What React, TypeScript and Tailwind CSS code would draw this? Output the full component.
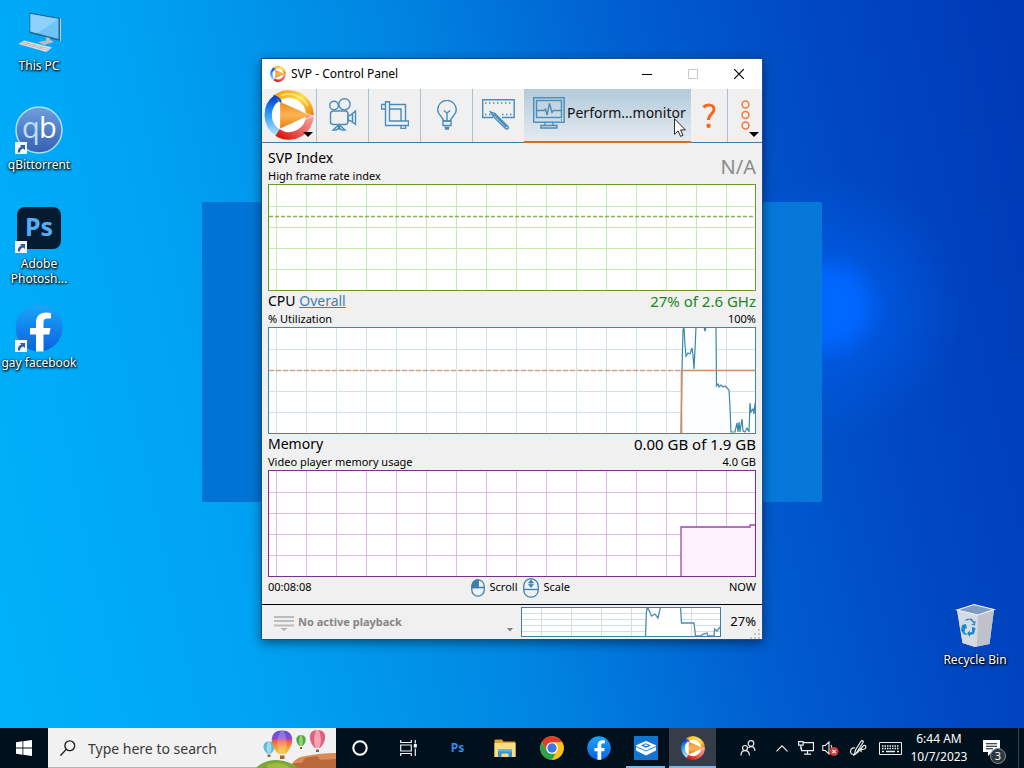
import React, { useState } from 'react';

type Point = [number, number];

const CPU_TRACE: Point[] = [
  [413, 106], [414, 43], [415, 3], [416, 0], [417, 18], [418, 29], [420, 26], [422, 27], [424, 21],
  [425, 28], [426, 42], [427, 23], [428, 0], [436, 0], [437, 4], [438, 0], [448, 0], [448.5, 59],
  [450, 57], [451, 60], [453, 58], [455, 60], [457, 59], [459, 61], [461, 63], [462, 80], [463, 105],
  [467, 105], [469, 96], [470, 105], [471, 95], [472, 105], [473, 98], [474, 92], [475, 104],
  [477, 105], [479, 101], [481, 105], [482, 76], [483, 85], [485, 82], [486, 87], [487, 76],
];

const MINI_TRACE: Point[] = [
  [124.5, 29], [125.5, 4], [126.5, 0], [130.5, 9], [134, 7], [137, 11], [139.5, 0], [159.5, 0],
  [160.5, 16], [173, 16], [174.5, 29], [180, 29], [182, 27], [186, 26], [187, 29], [193, 29],
  [193.5, 22], [196, 24], [199, 20],
];

const MEMORY_TRACE: Point[] = [[413, 106], [413, 57], [482, 57], [482, 55], [487, 55]];

const toPoints = (points: Point[]) => points.map((p) => p.join(',')).join(' ');

interface ChartProps {
  label: string;
  border: string;
  grid: string;
  children?: React.ReactNode;
}

function Chart({ label, border, grid, children }: ChartProps) {
  return (
    <svg
      role="img"
      aria-label={label}
      viewBox="0 0 488 107"
      preserveAspectRatio="none"
      className="block h-[107px] w-full bg-white"
      fill="none"
    >
      <g stroke={grid}>
        {Array.from({ length: 16 }, (_, i) => (
          <path key={i} d={`M${8.5 + i * 30} 0V107`} />
        ))}
        {[22.5, 43.5, 64.5, 85.5].map((y) => (
          <path key={y} d={`M0 ${y}H488`} />
        ))}
      </g>
      {children}
      <rect x="0.5" y="0.5" width="487" height="106" stroke={border} />
    </svg>
  );
}

function SvpLogo({ id, className }: { id: string; className: string }) {
  return (
    <svg viewBox="0 0 48 48" className={className} fill="none" aria-hidden="true">
      <defs>
        <linearGradient id={`${id}-blue`} x1="0" y1="0" x2="0" y2="1">
          <stop offset="0" stopColor="#0b3fd0" />
          <stop offset="0.45" stopColor="#2a9af5" />
          <stop offset="1" stopColor="#a8dcff" />
        </linearGradient>
        <linearGradient id={`${id}-yellow`} x1="0" y1="0" x2="1" y2="1">
          <stop offset="0" stopColor="#f5a216" />
          <stop offset="0.45" stopColor="#ffdf45" />
          <stop offset="1" stopColor="#f08a1c" />
        </linearGradient>
        <linearGradient id={`${id}-red`} x1="1" y1="0" x2="0" y2="1">
          <stop offset="0" stopColor="#f7a09a" />
          <stop offset="0.5" stopColor="#e96a68" />
          <stop offset="1" stopColor="#d9150f" />
        </linearGradient>
        <linearGradient id={`${id}-play`} x1="0" y1="0" x2="0" y2="1">
          <stop offset="0" stopColor="#f08a1a" />
          <stop offset="0.5" stopColor="#fbb454" />
          <stop offset="1" stopColor="#ee7d10" />
        </linearGradient>
      </defs>
      <circle cx="24" cy="24" r="20" fill="#fff" />
      <path d="M14 41.300A20 20 0 0 1 13 7.300" stroke={`url(#${id}-blue)`} strokeWidth="7" />
      <path d="M44 23A20 20 0 0 1 13 40.700" stroke={`url(#${id}-red)`} strokeWidth="7.500" />
      <path d="M12 8A20 20 0 0 1 44 24" stroke={`url(#${id}-yellow)`} strokeWidth="7.500" />
      <path d="M9 5.500C13 7 16 9 16 12" stroke="#1247c9" strokeWidth="2" />
      <path d="M15.500 11.500 44 24 15.500 37z" fill={`url(#${id}-play)`} />
      <path d="M36 20.500 47 25 38 29" stroke="#fff" strokeOpacity="0.6" />
      <path d="M16 5.500A20.500 20.500 0 0 1 42 15" stroke="#fff3a0" strokeOpacity="0.8" strokeWidth="1.500" />
    </svg>
  );
}

function ToolIcon({ viewBox, className, children }: { viewBox: string; className: string; children: React.ReactNode }) {
  return (
    <svg viewBox={viewBox} className={className} fill="none" stroke="#4a8db8" strokeWidth="1.4" aria-hidden="true">
      {children}
    </svg>
  );
}

function CameraIcon() {
  return (
    <ToolIcon viewBox="0 0 28 33" className="h-[33px] w-7">
      <circle cx="5" cy="7.500" r="4.300" />
      <circle cx="15.500" cy="6.300" r="5.600" />
      <rect x="1.500" y="13" width="17.500" height="13.500" rx="3" />
      <path d="M19 17.500h2l5.500-4.500v13.500L21 22.500h-2zM23.500 15.500V24M10 26.500 4 32h3.500L10 29l2.500 3H16zM10 26.500V32" />
    </ToolIcon>
  );
}

function CropIcon() {
  return (
    <ToolIcon viewBox="0 0 28 28" className="size-7">
      <path d="M4.500.7h4V20h19v4.500h-23zM4.500 3.500h-4V8h4M8.500 3.500h16V20M8.500 8H20v12M20 24.500v3h4.500v-3" />
    </ToolIcon>
  );
}

function BulbIcon() {
  return (
    <ToolIcon viewBox="0 0 20 30" className="h-[30px] w-5">
      <path d="M6.500 21c0-4-5.800-6-5.800-11.300a9.300 9.300 0 0 1 18.600 0C19.300 15 13.500 17 13.500 21z" />
      <path d="M10 21v-8L6.800 10.500M10 13l3.200-2.500M6 21h8v4.500H6zM7.500 27.500h5M8 29h4" />
    </ToolIcon>
  );
}

function FilmIcon() {
  return (
    <ToolIcon viewBox="0 0 33 31" className="h-[31px] w-[33px]">
      <path d="M11 18.500H.7V.7h31.500v17.800H20" />
      <path d="M3 4h28M3 15.500h6M20 15.500h11" strokeDasharray="1.500 2.500" />
      <path d="m8.500 13 4.500 1.500L26 27.500c1.500 1.500-1 3.500-2.500 2L11 17zM13 14.500 11 17M12.500 15.800l12 12.500" />
    </ToolIcon>
  );
}

function MonitorIcon() {
  return (
    <ToolIcon viewBox="0 0 32 32" className="h-8 w-8">
      <rect x="0.700" y="0.700" width="30.500" height="24.500" />
      <rect x="3.500" y="3.500" width="25" height="17" />
      <path d="M4 13.500h7l1.500-1.500 1.500 6L16.500 6.500l2.500 9 1.500-2h7.500M12 25v3.500h8V25M8 28.500h16V31H8zM28 23h1" />
    </ToolIcon>
  );
}

function ToolButton({ label, children }: { label: string; children: React.ReactNode }) {
  return (
    <button
      type="button"
      aria-label={label}
      className="flex w-[52px] shrink-0 items-center justify-center border-l border-[#a9c0d2] pb-0.5"
    >
      {children}
    </button>
  );
}

function Toolbar() {
  return (
    <div className="flex h-[54px] border-b border-[#3b7cac] bg-[#f0f0f0]">
      <button type="button" aria-label="Main menu" className="relative flex w-[54px] shrink-0 items-center justify-center pb-0.5">
        <SvpLogo id="toolbar" className="size-[50px]" />
        <svg viewBox="0 0 10 5" className="absolute right-[3px] bottom-[5px] h-[5px] w-[10px]" aria-hidden="true">
          <path d="M0 0h10L5 5z" />
        </svg>
      </button>
      <ToolButton label="Video profiles"><CameraIcon /></ToolButton>
      <ToolButton label="Crop"><CropIcon /></ToolButton>
      <ToolButton label="Lights"><BulbIcon /></ToolButton>
      <ToolButton label="Processing"><FilmIcon /></ToolButton>
      <button
        type="button"
        className="relative -mb-px flex min-w-0 flex-1 items-center gap-0.5 border-b-2 border-[#cf6f27] bg-linear-to-b from-[#b3cbdc] to-[#e4eaef] pb-1 pl-[9px] text-sm whitespace-nowrap text-[#111]"
      >
        <MonitorIcon />
        <span>Perform...monitor</span>
        <svg viewBox="0 0 12 19" className="absolute top-[29px] right-[5px] h-[19px] w-3" aria-hidden="true">
          <path d="M.5.8v15.500l3.600-3.400 2.500 5.500 2.400-1-2.400-5.500h4.800z" fill="#fff" stroke="#111" strokeWidth="0.900" />
        </svg>
      </button>
      <button type="button" aria-label="Help" className="flex w-9 shrink-0 items-center justify-center">
        <svg viewBox="0 0 14 26" className="h-[26px] w-3.5" fill="none" aria-hidden="true">
          <path d="M1.500 4.500C4 1.500 12 .500 12 6.500c0 4.500-5.500 4.500-5.500 10.500" stroke="#f06a1f" strokeWidth="3" />
          <circle cx="6.600" cy="22.800" r="2.200" fill="#f06a1f" />
        </svg>
      </button>
      <button
        type="button"
        aria-label="More"
        className="relative flex w-[35px] shrink-0 items-center justify-center border-l border-[#a9c0d2] pb-0.5"
      >
        <svg viewBox="0 0 9 30" className="h-[30px] w-[9px]" fill="none" stroke="#ee7a41" strokeWidth="1.500" aria-hidden="true">
          <circle cx="4.500" cy="4.500" r="3.400" />
          <circle cx="4.500" cy="15" r="3.400" />
          <circle cx="4.500" cy="25.500" r="3.400" />
        </svg>
        <svg viewBox="0 0 10 5" className="absolute right-[3px] bottom-[5px] h-[5px] w-[10px]" aria-hidden="true">
          <path d="M0 0h10L5 5z" />
        </svg>
      </button>
    </div>
  );
}

function TitleBar() {
  return (
    <header className="flex h-[30px] items-center bg-white pl-2">
      <SvpLogo id="title" className="size-4" />
      <h1 className="ml-[5px] flex-1 text-xs text-black">SVP - Control Panel</h1>
      <button type="button" aria-label="Minimize" className="flex h-full w-[46px] items-center justify-center">
        <svg viewBox="0 0 10 10" className="size-2.5"><path d="M0 5.500h10" stroke="#000" /></svg>
      </button>
      <button type="button" aria-label="Maximize" disabled className="flex h-full w-[46px] items-center justify-center">
        <svg viewBox="0 0 10 10" className="size-2.5" fill="none"><path d="M.5.5h9v9h-9z" stroke="#c8c8c8" /></svg>
      </button>
      <button type="button" aria-label="Close" className="flex h-full w-[46px] items-center justify-center">
        <svg viewBox="0 0 10 10" className="size-2.5"><path d="m0 0 10 10M10 0 0 10" stroke="#000" strokeWidth="1.200" /></svg>
      </button>
    </header>
  );
}

function ChartHeading({ title, value, left, right }: {
  title: React.ReactNode;
  value: React.ReactNode;
  left: string;
  right: string;
}) {
  return (
    <div className="h-9">
      <div className="flex h-5 items-center justify-between">
        <h2 className="text-sm">{title}</h2>
        <span className="text-[15px]">{value}</span>
      </div>
      <div className="flex h-4 items-center justify-between text-[11px]">
        <span>{left}</span>
        <span>{right}</span>
      </div>
    </div>
  );
}

function Monitor() {
  return (
    <main className="px-1.5 text-black">
      <div className="flex h-[41px] items-center justify-between pt-1">
        <div>
          <h2 className="text-sm leading-5">SVP Index</h2>
          <p className="text-[11px] leading-[15px]">High frame rate index</p>
        </div>
        <span className="pt-0.5 text-xl text-[#8b8b8b]">N/A</span>
      </div>
      <Chart label="SVP Index" border="#6b9a2e" grid="#c6ecad">
        <path d="M1 32.500H487" stroke="#8fae62" strokeWidth="1.400" strokeDasharray="4 2" />
      </Chart>

      <ChartHeading
        title={<>CPU <a href="#overall" className="text-[#3d7fb5] underline">Overall</a></>}
        value={<span className="text-[#1c861c]">27% of 2.6 GHz</span>}
        left="% Utilization"
        right="100%"
      />
      <Chart label="CPU utilization" border="#3f86b0" grid="#cfe3ea">
        <polygon points={`${toPoints(CPU_TRACE)} 487,107 413,107`} fill="#fdfeff" />
        <path d="M413 22.500h2M458.500 0v58M449 22.500h38" stroke="#cfe3ea" />
        <polyline points={toPoints(CPU_TRACE)} stroke="#3a87a8" strokeWidth="1.200" />
        <path d="M1 43.500H413" stroke="#d9a27c" strokeWidth="1.500" strokeDasharray="5 2" />
        <path d="M413.500 106V43.500H487" stroke="#d58b62" strokeWidth="1.600" />
      </Chart>

      <ChartHeading
        title="Memory"
        value="0.00 GB of 1.9 GB"
        left="Video player memory usage"
        right="4.0 GB"
      />
      <Chart label="Video player memory usage" border="#7b2f8e" grid="#dfb9e3">
        <polygon points={`${toPoints(MEMORY_TRACE)} 487,107`} fill="#fcf1fe" />
        <polyline points={toPoints(MEMORY_TRACE)} stroke="#9a48ac" strokeWidth="1.300" />
      </Chart>

      <div className="flex h-[27px] items-center justify-between pb-1.5 text-[11px]">
        <span>00:08:08</span>
        <span className="flex items-center gap-[5px]">
          <svg viewBox="0 0 14 18" className="h-[18px] w-3.5" fill="none" stroke="#3a80ae" strokeWidth="1.300" aria-hidden="true">
            <path d="M7 1a6 6 0 0 0-6 6v1.500h6z" fill="#3a80ae" />
            <rect x="0.800" y="0.800" width="12.400" height="16.400" rx="6.200" />
            <path d="M1 8.500h12M7 1v7.500" />
          </svg>
          Scroll
          <svg viewBox="0 0 16 20" className="h-5 w-4" fill="none" stroke="#3a80ae" strokeWidth="1.300" aria-hidden="true">
            <rect x="0.800" y="0.800" width="14.400" height="18.400" rx="7" />
            <path d="M1 11.500h14" />
            <path d="m8 2 2.500 3h-5zM8 9.500l2.500-3h-5zM8 4v4" fill="#3a80ae" strokeWidth="0.600" />
          </svg>
          Scale
        </span>
        <span>NOW</span>
      </div>
    </main>
  );
}

function StatusBar() {
  return (
    <footer className="relative flex h-[35px] items-center border-t border-black pl-3">
      <svg viewBox="0 0 20 16" className="mt-0.5 h-4 w-5" stroke="#bcbcbc" strokeWidth="2" aria-hidden="true">
        <path d="M0 2h20M0 6h20M0 10.500h20" />
        <path d="M6.500 13h7l-3.500 3z" fill="#b0b0b0" stroke="none" />
      </svg>
      <span className="ml-1 flex-1 text-[11px] font-bold text-[#858585]">No active playback</span>
      <svg viewBox="0 0 6 4" className="mt-4 mr-2 h-1 w-1.5" fill="#7d7d7d" aria-hidden="true">
        <path d="M0 0h6L3 3.500z" />
      </svg>
      <svg
        role="img"
        aria-label="Recent CPU load"
        viewBox="0 0 200 30"
        className="h-[30px] w-[200px] bg-white"
        fill="none"
      >
        <path
          d="M20.500 0V30M50.500 0V30M80.500 0V30M110.500 0V30M170.500 0V30M0 6.500H125M0 12.500H125M0 18.500H125M0 24.500H125M160 6.500H200M160 12.500H200M174 18.500H200M174 24.500H200"
          stroke="#cde0ec"
        />
        <polyline points={toPoints(MINI_TRACE)} stroke="#4c8db2" strokeWidth="1.300" />
        <rect x="0.500" y="0.500" width="199" height="29" stroke="#3c7fab" />
      </svg>
      <span className="w-[41px] pr-1.5 text-right text-[13px] text-black">27%</span>
      <svg viewBox="0 0 10 10" className="absolute right-0.5 bottom-0 size-2.5" fill="#c9c3c9" aria-hidden="true">
        <path d="M8 0h2v2H8zM4 4h2v2H4zM8 4h2v2H8zM0 8h2v2H0zM4 8h2v2H4zM8 8h2v2H8z" />
      </svg>
    </footer>
  );
}

function ShortcutArrow() {
  return (
    <svg viewBox="0 0 12 12" className="absolute bottom-0 left-0 size-3" aria-hidden="true">
      <path d="M0 0h12v12H0z" fill="#f2f6fb" />
      <path d="M3 10.500C2.500 7 4.500 5 6.500 5L5 3h5v5L8.300 6.500C6 7 5 8.500 5 10.500z" fill="#2c5d9e" />
    </svg>
  );
}

function DesktopIcon({ label, shortcut, children }: { label: string; shortcut?: boolean; children: React.ReactNode }) {
  return (
    <button
      type="button"
      className="flex w-[78px] flex-col items-center gap-[3px] text-center text-xs leading-[15px] text-white [text-shadow:1px_1px_2px_#000,0_0_2px_#000c,0_1px_3px_#000a]"
    >
      <span className="relative block size-12">
        {children}
        {shortcut && <ShortcutArrow />}
      </span>
      <span className="whitespace-pre">{label}</span>
    </button>
  );
}

function FacebookMark({ id, className }: { id: string; className: string }) {
  return (
    <svg viewBox="0 0 48 48" className={className} aria-hidden="true">
      <defs>
        <linearGradient id={id} x1="0" y1="0" x2="0" y2="1">
          <stop offset="0" stopColor="#1ba5f7" />
          <stop offset="1" stopColor="#0a62e2" />
        </linearGradient>
      </defs>
      <circle cx="24" cy="24" r="23.500" fill={`url(#${id})`} />
      <path
        d="M21 47.500V30.500h-6V24h6v-5c0-7 3.800-10.500 10-10.500 2 0 3.500.2 5 .5v5.500h-3.500c-3 0-4 1.500-4 4V24h7l-1.200 6.500h-5.800v17z"
        fill="#fff"
      />
    </svg>
  );
}

function DesktopIcons() {
  return (
    <nav aria-label="Desktop" className="flex flex-col items-center gap-[33px] pt-[7px]">
      <DesktopIcon label="This PC">
        <svg viewBox="0 0 48 48" className="size-12" aria-hidden="true">
          <path d="M14.500 5.500 45 11v23L14.500 26z" fill="#27658f" />
          <path d="M15.500 7 43.500 12v20L15.500 24.500z" fill="#6fc3f8" />
          <path d="M15.500 7 43.500 12 22 26.300l-6.500-1.800z" fill="#8dd2fb" />
          <path d="m45 11 1 .5V34l-1 .5z" fill="#c9c9c9" />
          <path d="m25 29 6 1.500v3l-8 1.500 6 3 10-3-4-2.500V31z" fill="#b9bcc2" />
          <path d="m9 33.500 28 7-5.500 4.500L3.500 37z" fill="#e9e3e4" />
          <path d="m7.500 35 27.500 7M5.500 36 33 43.500M14 35l-4 3.500M21 37l-4.500 3.500M28 38.700 23.500 42" stroke="#b5acb6" strokeWidth="0.800" />
        </svg>
      </DesktopIcon>
      <DesktopIcon label="qBittorrent" shortcut>
        <svg viewBox="0 0 48 48" className="size-12 [text-shadow:none]" aria-hidden="true">
          <defs>
            <linearGradient id="qb" x1="0" y1="0" x2="0" y2="1">
              <stop offset="0" stopColor="#6d9fdc" />
              <stop offset="1" stopColor="#3560b5" />
            </linearGradient>
          </defs>
          <circle cx="24" cy="24" r="23" fill="url(#qb)" stroke="#a6e3fa" strokeWidth="1.500" />
          <text x="7" y="32" fontFamily="Open Sans, sans-serif" fontSize="29" fill="#bfe0fa">q</text>
          <text x="24" y="32" fontFamily="Open Sans, sans-serif" fontSize="29" fill="#fff">b</text>
        </svg>
      </DesktopIcon>
      <DesktopIcon label={'Adobe\nPhotosh...'} shortcut>
        <span className="absolute inset-x-0.5 top-0.5 flex h-[42px] items-center justify-center rounded-lg bg-[#041c32] pb-1 text-[25px] font-bold text-[#55aef5] [text-shadow:none]">
          Ps
        </span>
      </DesktopIcon>
      {/* the two-line label above eats into this gap */}
      <div className="-mt-[15px]">
        <DesktopIcon label="gay facebook" shortcut>
          <FacebookMark id="fb-desktop" className="size-12" />
        </DesktopIcon>
      </div>
    </nav>
  );
}

function RecycleBin() {
  return (
    <DesktopIcon label="Recycle Bin">
      <svg viewBox="0 0 48 48" className="size-12" aria-hidden="true">
        <path d="M6 9 23 3.500 43 8.500 38.500 43 24 46 11.500 42z" fill="#c3c8d3" />
        <path d="M6 9 23 3.500 43 8.500 27 14z" fill="#7f9cc4" />
        <path d="m6 9 21 5-1 31.500-2 .5-12.500-4z" fill="#d5dae3" />
        <path d="M27 14 43 8.500 38.500 43 26 45.500z" fill="#bfc2ca" />
        <path d="M6 9 23 3.500 43 8.500 27 14z" fill="none" stroke="#eef2f7" strokeWidth="1.200" />
        <g fill="#1e86cf">
          <path d="m14 20 5-1.500 4 4-3 1 4 1 .5-4.500-1.500.5-2.500-3-5 .5z" />
          <path d="m11 24 4-1 1 4.500-1.500-.5-1 4 3 3-3.500-.5-3-4z" />
          <path d="m21 26 3.500 1-1.500 6-4 1v2l-3-3.500 3-3v2l2-.5z" />
        </g>
      </svg>
    </DesktopIcon>
  );
}

function BalloonArt() {
  return (
    <svg viewBox="0 0 80 40" className="h-10 w-20 shrink-0" aria-hidden="true">
      <defs>
        <linearGradient id="balloon" x1="0" y1="0" x2="0" y2="1">
          <stop offset="0" stopColor="#5a55d6" />
          <stop offset="0.350" stopColor="#8c4bd0" />
          <stop offset="0.450" stopColor="#ef5a4c" />
          <stop offset="0.750" stopColor="#f6a52e" />
          <stop offset="1" stopColor="#f7c83c" />
        </linearGradient>
      </defs>
      <path d="M30 40c8-4 8-11 20-12 10-2 20-3 30-3v15z" fill="#d98a55" />
      <path d="M38 35h8l3-5 12-2 3 4 16-1v9H36z" fill="#b9683c" />
      <path d="M0 40c9-9 22-10 34-5l9 5z" fill="#7da53a" />
      <path d="M10 37c8-3 18-3 24 3H12z" fill="#9dbb3f" />
      <path d="M13 13.500c7 0 7 8 2 12h-4c-5-4-5-12 2-12z" fill="#5fb8d8" />
      <path d="M12 14c-2 4-2 8 0 11.500h2c2-3.500 2-7.500 0-11.500z" fill="#9ddbe9" />
      <path d="M11.500 26.500h3V29h-3z" fill="#8c6a3c" />
      <path d="M26 2.500c13 0 13 14 3.500 23.500h-7C13 16.500 13 2.500 26 2.500z" fill="url(#balloon)" />
      <path d="M24.500 3c-4 7-4 15-1 23h5c3-8 3-16-1-23z" fill="#fff" fillOpacity="0.220" />
      <path d="M24 27.500h4.500V31H24z" fill="#a2662c" />
      <path d="M45 7c6 0 6 7 1.500 11h-3C39 14 39 7 45 7z" fill="#4aa84a" />
      <path d="M44.500 7c-2 4-2 7-.5 11h2c1.500-4 1.500-7-.5-11z" fill="#97d06a" />
      <path d="M44 19h2v2h-2z" fill="#85602f" />
      <path d="M61.500 2c10 0 9.500 11 2.500 18h-5C52 13 51.500 2 61.500 2z" fill="#e0607f" />
      <path d="M60.500 2c-3 6-3 12-1 18h4c2-6 2-12-1-18z" fill="#f5a3b4" />
      <path d="M60 21.500h3V24h-3z" fill="#965a34" />
    </svg>
  );
}

function TaskButton({ label, active, underline, children }: {
  label: string;
  active?: boolean;
  underline?: boolean;
  children: React.ReactNode;
}) {
  return (
    <button
      type="button"
      aria-label={label}
      className={`relative flex w-[47px] items-center justify-center ${active ? 'bg-[#343d49]' : ''}`}
    >
      {children}
      {underline && <span className="absolute inset-x-1 bottom-0 h-0.5 bg-[#76b9ed]" />}
      {active && <span className="absolute inset-x-0 bottom-0 h-0.5 bg-[#76b9ed]" />}
    </button>
  );
}

function TrayIcon({ label, className, children }: { label: string; className: string; children: React.ReactNode }) {
  return (
    <button type="button" aria-label={label} className={`flex items-center justify-center ${className}`}>
      {children}
    </button>
  );
}

function Taskbar() {
  const [query, setQuery] = useState('');

  return (
    <div className="flex h-10 items-stretch bg-[#01101d] text-white">
      <TrayIcon label="Start" className="w-12">
        <svg viewBox="0 0 16 16" className="size-4" fill="#fff">
          <path d="m0 2.300 6.500-1v6.200H0zM7.300 1.200 16 0v7.500H7.300zM0 8.400h6.500v6.300L0 13.700zM7.300 8.400H16V16l-8.700-1.200z" />
        </svg>
      </TrayIcon>
      <label className="flex w-72 items-center border-b border-[#b5b5b5] bg-[#f1f1f1]">
        <svg viewBox="0 0 18 18" className="mx-3 size-4 shrink-0" fill="none" stroke="#1a1a1a" strokeWidth="1.500" aria-hidden="true">
          <circle cx="11" cy="6.500" r="5.500" />
          <path d="m7 10.500-6.500 7" />
        </svg>
        <input
          type="text"
          aria-label="Type here to search"
          placeholder="Type here to search"
          value={query}
          onChange={(e) => setQuery(e.target.value)}
          className="min-w-0 flex-1 bg-transparent pt-0.5 text-sm text-black outline-none placeholder:text-[#3a3a3a]"
        />
        <BalloonArt />
      </label>

      <TrayIcon label="Cortana" className="w-12">
        <svg viewBox="0 0 16 16" className="size-4" fill="none"><circle cx="8" cy="8" r="6.700" stroke="#fff" strokeWidth="2" /></svg>
      </TrayIcon>
      <TrayIcon label="Task View" className="mr-0.5 w-12">
        <svg viewBox="0 0 17 16" className="h-4 w-[17px]" fill="none" stroke="#f2f2f2" strokeWidth="1.200">
          <path d="M.7 0v2.500h10.600V0M.7 16v-2.500h10.600V16M.7 5h10.600v6H.7zM15.300 0v3.500M15.300 8.500V16" />
          <path d="M13.800 4h3v3.500h-3z" fill="#fff" stroke="none" />
        </svg>
      </TrayIcon>

      <TaskButton label="Photoshop">
        <span className="flex size-6 items-center justify-center text-xs font-bold text-[#2d8fe8]">Ps</span>
      </TaskButton>
      <TaskButton label="File Explorer">
        <svg viewBox="0 0 22 19" className="h-[19px] w-[22px]">
          <path d="M.5 1.500q0-1 1-1H8l1.500 2h11q1 0 1 1V18H.5z" fill="#dfa02c" />
          <path d="M.5 4h21v14H.5z" fill="#fbdc82" />
          <path d="M4 18v-7.500h14V18h-3.500v-3.500h-7V18z" fill="#3f8fc9" />
          <path d="M4 10.500h14v2H4z" fill="#64b0e2" />
        </svg>
      </TaskButton>
      <TaskButton label="Chrome">
        <svg viewBox="0 0 48 48" className="size-6">
          <circle cx="24" cy="24" r="23.500" fill="#fbc116" />
          <path d="M3.700 12.200A23.500 23.500 0 0 1 44.400 12.300H24L13.800 30z" fill="#e33b2e" />
          <path d="M3.700 12.200 13.800 29.900 24 35.800h10.200L24 47.500A23.500 23.500 0 0 1 3.700 12.200z" fill="#2aa14b" />
          <path d="M34.200 29.900 24 47.500a23.500 23.500 0 0 0 20.400-35.200H24z" fill="#fbc116" />
          <circle cx="24" cy="24" r="11.700" fill="#fff" />
          <circle cx="24" cy="24" r="9.300" fill="#3b78e7" />
        </svg>
      </TaskButton>
      <TaskButton label="Facebook">
        <FacebookMark id="fb-task" className="size-6" />
      </TaskButton>
      <TaskButton label="Windows Sandbox" underline>
        <svg viewBox="0 0 24 24" className="size-6">
          <path d="M0 0h24v24H0z" fill="#1373d0" />
          <path d="m12 5 10 4.200v5.300L12 19.500 2 14.500V9.200z" fill="#fff" />
          <path d="m2 10.500 10 4.500 10-4.500" fill="none" stroke="#1373d0" strokeWidth="0.900" />
          <path d="M12 7.300 17 9.500 12 11.800 7 9.500z" fill="#1373d0" />
          <path d="m9.500 9.300 2.500-1 2.500 1-2.500 1z" fill="#fff" />
        </svg>
      </TaskButton>
      <TaskButton label="SVP" active>
        <SvpLogo id="task" className="size-6" />
      </TaskButton>

      <div className="ml-auto flex items-stretch">
        <TrayIcon label="People" className="w-11">
          <svg viewBox="0 0 16 16" className="size-4" fill="none" stroke="#eee" strokeWidth="1.200">
            <circle cx="11" cy="3.500" r="2.800" />
            <circle cx="5" cy="8" r="2.500" />
            <path d="M1 15.500c0-6.500 8-6.500 8.500 0M8.500 7.800c3-2.500 6.500-1 6.500 3.200" />
          </svg>
        </TrayIcon>
        <TrayIcon label="Show hidden icons" className="w-6">
          <svg viewBox="0 0 12 7" className="h-[7px] w-3" fill="none"><path d="m.5 6.300 5.500-5.500 5.500 5.500" stroke="#eee" strokeWidth="1.200" /></svg>
        </TrayIcon>
        <TrayIcon label="Network" className="w-6">
          <svg viewBox="0 0 16 14" className="h-3.5 w-4" fill="none" stroke="#eee" strokeWidth="1.200">
            <path d="M5.500 1.700h10v8h-12v-3.500M9.500 9.700V13M6 13.200h7M.6.700h4.500v3.500H.6zM2.800 4.200v3.500h1" />
          </svg>
        </TrayIcon>
        <TrayIcon label="Volume, muted" className="w-6">
          <svg viewBox="0 0 17 16" className="h-4 w-[17px]" fill="none" stroke="#eee">
            <path d="M.8 5.500h2.500L7 2v12l-3.700-3.500H.8zM9 5c1 1.500 1 3 .5 4.500" strokeWidth="1.100" />
            <circle cx="12" cy="11.500" r="4.500" fill="#d03b3b" stroke="none" />
            <path d="m10.300 9.800 3.400 3.400M13.700 9.800l-3.400 3.400" strokeWidth="1.200" />
          </svg>
        </TrayIcon>
        <TrayIcon label="Windows Ink" className="w-8">
          <svg viewBox="0 0 17 17" className="size-[17px]" fill="none" stroke="#eee" strokeWidth="1.200">
            <path d="M5 8c-3-1-5 2-4.300 4.500.5 2.500 4 2.500 5.300 1L13 2.500c1-1.500-1-2.500-2-1.200L5.500 10l-1.300 5L8 12l5.500-6.500c3-1 3 2.500 1 3.500-2.500 1-5-.5-3 3" />
          </svg>
        </TrayIcon>
        <TrayIcon label="Touch keyboard" className="w-8">
          <svg viewBox="0 0 23 13" className="h-[13px] w-[23px]" fill="none" stroke="#eee">
            <path d="M.5.5h22v12H.5z" />
            <path d="M3 4h17M3 6.500h17" strokeWidth="1.300" strokeDasharray="1.500 1" />
            <path d="M3 9.500h2M7 9.500h9M18 9.500h2" strokeWidth="1.300" />
          </svg>
        </TrayIcon>
        <div className="flex w-[66px] flex-col items-center justify-center gap-0.5 text-xs leading-4 whitespace-nowrap">
          <span>6:44 AM</span>
          <span>10/7/2023</span>
        </div>
        <button type="button" aria-label="Notifications" className="relative flex w-[47px] items-center justify-center border-r border-[#3a4752] pr-2">
          <svg viewBox="0 0 17 16" className="h-4 w-[17px]" fill="#fff">
            <path d="M0 0h17v12H9l-4 4v-4H0zM3 3.300h11v1H3zM3 5.800h11v1H3zM3 8.300h7v1H3z" fillRule="evenodd" />
          </svg>
          <span className="absolute right-3 bottom-1 flex size-4 items-center justify-center rounded-full border border-[#858c93] bg-[#2d3740] text-[11px]">
            3
          </span>
        </button>
        <div className="w-[5px]" />
      </div>
    </div>
  );
}

export default function App() {
  return (
    <div className="flex h-screen flex-col overflow-hidden bg-[radial-gradient(circle_at_81%_40%,#0068ff_0,#0066ff_3%,#005ce899_6%,transparent_14%),linear-gradient(78deg,#00b2fa_0%,#00a4f4_22%,#0086e2_46%,#005ed0_66%,#0048c2_82%,#0038b6_100%)] font-['Noto_Sans','Open_Sans',sans-serif]">
      <div className="relative flex flex-1 items-start justify-between">
        <div className="absolute top-[202px] left-1/2 h-[300px] w-[620px] -translate-x-1/2 bg-linear-to-r from-[#0074d6] to-[#0678da]" />
        <DesktopIcons />
        <section
          aria-label="SVP - Control Panel"
          className="absolute top-[58px] left-1/2 w-[502px] max-w-full -translate-x-1/2 border border-[#14508f] bg-[#f0f0f0] shadow-[0_3px_10px_#0007]"
        >
          <TitleBar />
          <Toolbar />
          <Monitor />
          <StatusBar />
        </section>
        <div className="mr-2.5 mb-[61px] self-end">
          <RecycleBin />
        </div>
      </div>
      <Taskbar />
    </div>
  );
}
